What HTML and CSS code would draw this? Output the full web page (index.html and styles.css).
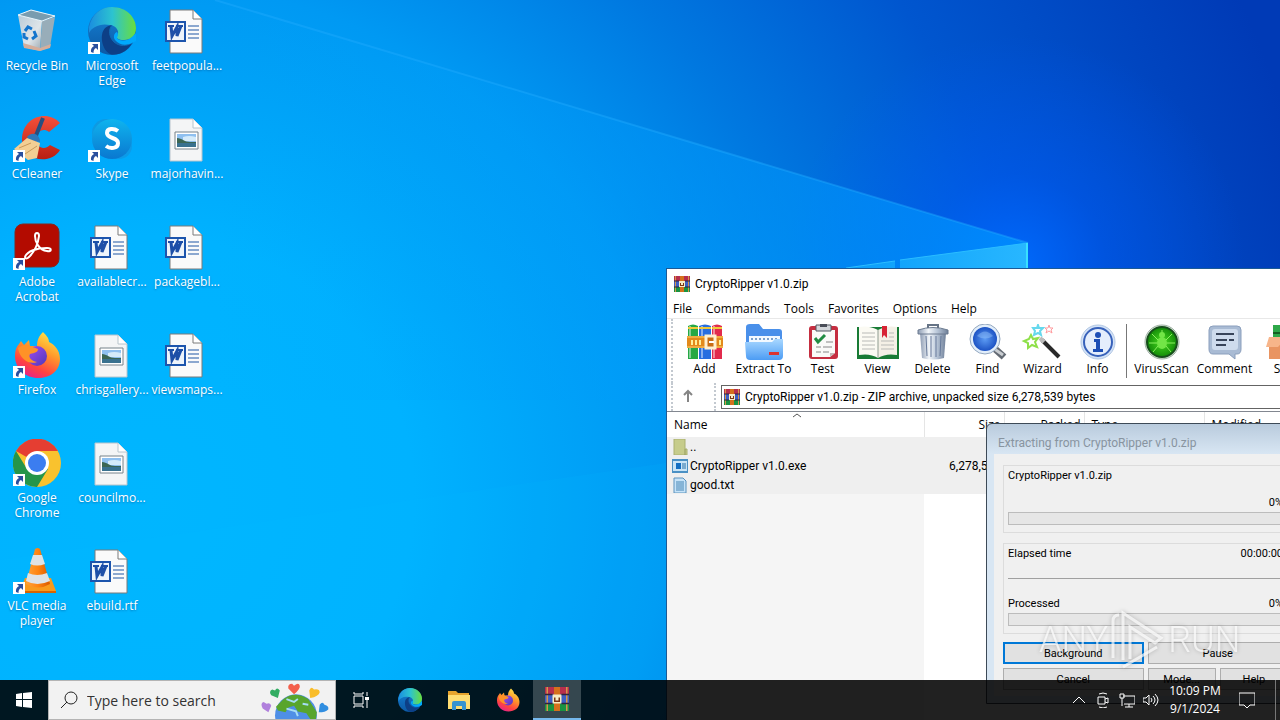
FILE: index.html
```html
<!DOCTYPE html>
<html lang="en">
<head>
    <meta charset="UTF-8">
    <meta name="viewport" content="width=device-width, initial-scale=1.0">
    <title>Desktop</title>
    <link rel="stylesheet" href="styles.css">
</head>
<body>
    <!-- icon library -->
    <svg class="sprite" aria-hidden="true">
        <defs>
            <linearGradient id="g-edge1" x1="0" y1="0" x2="1" y2="0"><stop offset="0" stop-color="#1a8ee0"/><stop offset=".5" stop-color="#2cc3d0"/><stop offset="1" stop-color="#6ade3c"/></linearGradient>
            <linearGradient id="g-edge2" x1="0" y1="0" x2="0" y2="1"><stop offset="0" stop-color="#1583d8"/><stop offset="1" stop-color="#0c59a4"/></linearGradient>
            <linearGradient id="g-ff" x1=".8" y1="0" x2=".3" y2="1"><stop offset="0" stop-color="#ffe94b"/><stop offset=".4" stop-color="#ff9a2a"/><stop offset=".75" stop-color="#ff4440"/><stop offset="1" stop-color="#e6218c"/></linearGradient>
            <linearGradient id="g-ff2" x1="0" y1="0" x2="1" y2="1"><stop offset="0" stop-color="#a44bf5"/><stop offset="1" stop-color="#4d39b8"/></linearGradient>
            <linearGradient id="g-red" x1="0" y1="0" x2="0" y2="1"><stop offset="0" stop-color="#f4503a"/><stop offset="1" stop-color="#b81e12"/></linearGradient>
            <linearGradient id="g-sky" x1="0" y1="0" x2="0" y2="1"><stop offset="0" stop-color="#0fb4ee"/><stop offset="1" stop-color="#0a78d0"/></linearGradient>
            <linearGradient id="g-vlc" x1="0" y1="0" x2="1" y2="0"><stop offset="0" stop-color="#ffa23a"/><stop offset=".5" stop-color="#ff8410"/><stop offset="1" stop-color="#d85800"/></linearGradient>
            <linearGradient id="g-bin" x1="0" y1="0" x2="1" y2="1"><stop offset="0" stop-color="#b8cbd8"/><stop offset=".6" stop-color="#dfe5e9"/><stop offset="1" stop-color="#9aa7b0"/></linearGradient>
            <linearGradient id="g-blue" x1="0" y1="0" x2="0" y2="1"><stop offset="0" stop-color="#a9d8ff"/><stop offset="1" stop-color="#4c9cf4"/></linearGradient>
            <linearGradient id="g-steel" x1="0" y1="0" x2="1" y2="0"><stop offset="0" stop-color="#8c9bb2"/><stop offset=".35" stop-color="#f2f6fa"/><stop offset=".65" stop-color="#b7c5d7"/><stop offset="1" stop-color="#6f7f98"/></linearGradient>
            <radialGradient id="g-lens"><stop offset="0" stop-color="#5d9cf4"/><stop offset="1" stop-color="#1d53c4"/></radialGradient>
            <radialGradient id="g-green"><stop offset="0" stop-color="#49dc20"/><stop offset="1" stop-color="#128a08"/></radialGradient>
        </defs>
        <symbol id="shortcut" viewBox="0 0 12 12">
            <path d="M0 0h12v12H0z" fill="#fff"/>
            <path d="M4 2h6v6L8 6C6 7 5.500 8.500 5.500 11L3 10C2.500 7 4 5 6 4z" fill="#2a4f9e"/>
        </symbol>
        <symbol id="i-bin" viewBox="0 0 48 48">
            <path d="M5 8l24 6-2 30-16-4z" fill="url(#g-bin)"/>
            <path d="M29 14l13-4-5 30-10 4z" fill="#98adb9"/>
            <path d="M5 8l13-5 24 6-13 5z" fill="#799caf" stroke="#eff7fb"/>
            <path d="M10 36l17 5 11-4-1 4-10 3-16-3z" fill="#d5ae9b"/>
            <g fill="none" stroke="#1475cc" stroke-width="3"><path d="M12 24l3-4 4 2"/><path d="M21 24l2 5-4 3"/><path d="M15 32l-4-2 0-4"/></g>
        </symbol>
        <symbol id="i-edge" viewBox="0 0 48 48">
            <circle cx="24" cy="24" r="24" fill="url(#g-edge2)"/>
            <path d="M1 20C4 7 13 0 24 0c15 0 24 11 24 21 0 8-5 12-12 12-6 0-8-2-7-4 3-4 0-10-7-11C12 16 4 20 1 26z" fill="url(#g-edge1)"/>
            <path d="M14 28c1-7 5-9 10-10-4 5-3 12 2 17 6 5 13 4 18 1-5 9-14 13-22 11-6-3-9-12-8-19z" fill="#0d3f86"/>
            <path d="M24 18c-4 5-3 12 2 17 6 5 13 4 18 1" fill="none" stroke="#1069b4"/>
            <path class="cut" d="M29 25c2 3 0 5 0 6 1 3 10 4 15-1l4-4v8l-4 2c-6 3-13 2-17-3-2-3-1-7 2-8z"/>
        </symbol>
        <symbol id="i-word" viewBox="0 0 48 48">
            <path d="M7 3h23l9 9v34H7z" fill="#fafafa" stroke="#7b7b7b"/>
            <path d="M30 3v9h9" fill="#fff" stroke="#7b7b7b"/>
            <path d="M25 19h11M25 23h11M25 27h11M25 31h11" stroke="#1f57a5" stroke-width="1"/>
            <path d="M2 14h21v21H2z" fill="#1d55ad"/><path d="M4 16h17v17H4z" fill="#eef4fb"/>
            <path d="M5 19h6M13 19h7" stroke="#1d4fa8" stroke-width="2"/><path d="M8 19l1 10 5-9 0 9 4-10" fill="none" stroke="#1d4fa8" stroke-width="3"/>
        </symbol>
        <symbol id="i-pic" viewBox="0 0 48 48">
            <path d="M7 4h23l9 9v33H7z" fill="#f4f5f6" stroke="#b8c4cc"/>
            <path d="M30 4v9h9" fill="#fff" stroke="#b8c4cc"/>
            <path d="M12 17h23v17H12z" fill="#fff" stroke="#77828a"/>
            <path d="M14 19h19v13H14z" fill="#8fc0f0"/><path d="M20 22q6-2 13 0v4H20z" fill="#d5ebfa"/>
            <path d="M14 23c5 0 7 4 13 4h6v2H14z" fill="#3b6654"/><path d="M14 28h19v4H14z" fill="#39718f"/>
        </symbol>
        <symbol id="i-ccleaner" viewBox="0 0 48 48">
            <path d="M47 8L36 17c-6-5-13 0-13 7 0 8 8 12 14 6l10 5C38 50 10 47 9 25 9 2 34-6 47 8z" fill="url(#g-red)"/>
            <path d="M30 3l-8 20" stroke="#264f80" stroke-width="4"/><path d="M14 22c5-6 13-3 13 5l-11-2z" fill="#2f78b8"/>
            <path d="M1 34l13-11 13 5-3 15-9 2z" fill="#f3cf94"/><path d="M6 33l12-5M12 39l12-8" stroke="#c99a5a"/>
        </symbol>
        <symbol id="i-skype" viewBox="0 0 48 48">
            <circle cx="18" cy="18" r="14" fill="#0e9ae2"/><circle cx="31" cy="31" r="13" fill="#0c9be8"/><circle cx="24" cy="24" r="20" fill="url(#g-sky)"/>
            <path d="M30 16c-4-3-11-3-11 2 0 6 11 4 11 10 0 6-8 6-12 3" fill="none" stroke="#fff" stroke-width="4"/>
        </symbol>
        <symbol id="i-acrobat" viewBox="0 0 48 48">
            <rect x="2" y="1" width="44" height="43" rx="8" fill="#b30b00" stroke="#85261f"/>
            <path d="M12 34c2-6 12-9 22-9 5 0 5 4 0 3-8-1-12-9-12-15 0-4 4-4 4 0-1 8-5 16-10 21-2 2-4 2-4 0z" fill="none" stroke="#fff" stroke-width="2"/>
        </symbol>
        <symbol id="i-firefox" viewBox="0 0 48 48">
            <path d="M30 1c3 3 6 6 6 10 5 2 11 8 11 17 0 12-10 19-22 19S2 38 2 25c0-5 1-9 4-12l2-3 3 4 5-5 1 6 7 0c0-6 2-10 6-14z" fill="url(#g-ff)"/>
            <circle cx="24" cy="25" r="10" fill="url(#g-ff2)"/>
            <path d="M5 17c4-3 9-4 12-2l8 3c0 3-3 4-8 5-2 3 1 7 7 8-7 3-17-2-19-14z" fill="#ff9227"/>
        </symbol>
        <symbol id="i-chrome" viewBox="0 0 48 48">
            <circle cx="24" cy="24" r="24" fill="#f9c22e"/>
            <path d="M24 24L3 12A24 24 0 0 1 45 12H24z" fill="#e53e32"/>
            <path d="M3 12A24 24 0 0 0 24 48L35 30 24 24 14 30z" fill="#25954a"/>
            <circle cx="24" cy="24" r="12" fill="#fff"/><circle cx="24" cy="24" r="9" fill="#3b7df0"/>
        </symbol>
        <symbol id="i-vlc" viewBox="0 0 48 48">
            <path d="M12 31h26l5 13v2H7v-2z" fill="#f99a1c"/><path d="M7 44h36v2H7z" fill="#d86400"/>
            <path d="M22 2q3-2 5 0l10 35q-12 7-24 0z" fill="url(#g-vlc)"/>
            <path d="M20 8h9l3 9q-8 3-15 0zM15 26q9 4 19 0l3 8q-13 6-24 0z" fill="#dfe2e4"/>
        </symbol>
        <symbol id="i-rar" viewBox="0 0 16 16">
            <path d="M0 0h16v5H0z" fill="#b62f4d"/><path d="M0 5h16v6H0z" fill="#3d5fc4"/><path d="M0 11h16v5H0z" fill="#199341"/>
            <path d="M1 0h1v16H1zM14 0h1v16h-1z" fill="#d7954b"/><path d="M6 0h4v16H6z" fill="#d5701c"/>
            <path d="M5 5h6v6H5z" fill="#f7ecc5"/><path d="M6 7h1v2h2V7h1v3H6z" fill="#7c3514"/><path d="M0 5h5M11 5h5M0 11h5M11 11h5" stroke="#30243d"/>
        </symbol>
        <symbol id="i-add" viewBox="0 0 36 36">
            <path d="M1 2q5-3 10 0v33H1z" fill="#26a845"/><path d="M12 2q6-3 12 0v33H12z" fill="#276ee0"/><path d="M25 2q5-3 10 0v33H25z" fill="#e22b4d"/>
            <path d="M3 2v32M15 2v32M27 2v32" stroke="#fff" stroke-opacity=".45" stroke-width="2"/>
            <path d="M1 4h10M12 4h12M25 4h10" stroke="#f1c93a" stroke-width="2"/>
            <path d="M0 12h36v12H0z" fill="#e38a1b"/><path d="M0 13h36M0 23h36" stroke="#ffd06a"/>
            <path d="M19 12h9v12h-9z" fill="#c96d13" stroke="#fff0cf" stroke-width="3"/><path d="M22 18h5" stroke="#fff" stroke-width="2"/><path d="M5 16v5M9 16v5M13 16v5M33 16v5" stroke="#fff09c" stroke-width="2"/>
        </symbol>
        <symbol id="i-extract" viewBox="0 0 38 36">
            <path d="M1 3q0-3 4-3h9l4 5h16q3 0 3 3v20H1z" fill="#4a90ea"/><path d="M4 12h31v12H4z" fill="#f2f9ff"/><path d="M6 15h27" stroke="#7aa0cc" stroke-dasharray="2 2" stroke-width="2"/>
            <path d="M0 18h27l3-3h8v17q0 4-4 4H5q-4 0-4-4z" fill="url(#g-blue)"/><path d="M24 28h10v3H24z" fill="#dc342f"/>
        </symbol>
        <symbol id="i-test" viewBox="0 0 36 36">
            <rect x="4" y="2" width="29" height="33" rx="3" fill="#c52e40"/><path d="M7 6h23v23l-5 4H7z" fill="#fafaf8"/><path d="M30 29h-5v4z" fill="#c3b7b5"/>
            <path d="M11 1h15v6H11z" fill="#d4d7db" stroke="#535660"/><path d="M15 0h7v3h-7z" fill="#4a4e58"/>
            <path d="M10 14l3 4 7-7" fill="none" stroke="#218b42" stroke-width="3"/><path d="M21 18h7M11 23h5M18 23h9M11 28h5M18 28h6" stroke="#888"/>
        </symbol>
        <symbol id="i-view" viewBox="0 0 44 36">
            <path d="M1 3h42v32H1z" fill="#187b35"/><path d="M22 6Q13 1 3 3v28q11-2 19 3z" fill="#fbfaf3"/><path d="M22 6q9-5 19-3v28q-11-2-19 3z" fill="#f4f0e6"/>
            <path d="M6 9h13M6 13h13M6 17h13M6 21h13M6 25h13M25 17h13M25 21h13M25 25h13M33 9h5M33 13h5" stroke="#b9bab7"/><path d="M22 6v28" stroke="#8e9c90"/>
            <path d="M26 2h5v12l-3-3-2 3z" fill="#d72435"/>
        </symbol>
        <symbol id="i-delete" viewBox="0 0 36 36">
            <path d="M5 9h26l-2 25q-11 3-22 0z" fill="url(#g-steel)"/><path d="M11 12l1 20M16 12v21M21 12v21M26 12l-1 20" stroke="#66799a"/>
            <path d="M3 6q15-5 30 0v4H3z" fill="url(#g-steel)" stroke="#6c7b90"/><path d="M13 4V1h10v3" fill="none" stroke="#667486" stroke-width="2"/>
        </symbol>
        <symbol id="i-find" viewBox="0 0 36 36">
            <path d="M24 24l10 9" stroke="#636a73" stroke-width="7"/><path d="M23 24l10 7" stroke="#c9cdd1" stroke-width="3"/>
            <circle cx="15" cy="15" r="15" fill="#e2eefa" stroke="#94a8c0"/><circle cx="15" cy="15" r="12" fill="url(#g-lens)"/><path d="M7 12q8-9 16 0-8 5-16 0z" fill="#a2cfff" opacity=".4"/>
        </symbol>
        <symbol id="i-wizard" viewBox="0 0 36 36">
            <path d="M17 16l17 17" stroke="#292929" stroke-width="4"/><path d="M15 14l4 4" stroke="#bbb" stroke-width="4"/><path d="M20 16l14 14" stroke="#aaa"/>
            <g fill="#fff"><path d="M6 11l2 4 5-1-3 4 2 5-5-2-4 3 0-5-4-2 5-2z" stroke="#8fe04a" stroke-width="2"/><path d="M13 1l1 3 4 0-3 3 1 4-3-2-4 2 1-4-2-3 4 0z" stroke="#66d8ed" stroke-width="2"/><path d="M24 1l1 3 3 0-2 2 1 3-3-2-3 2 1-3-2-2 3 0z" stroke="#ff9b9e"/></g>
        </symbol>
        <symbol id="i-info" viewBox="0 0 36 36">
            <circle cx="18" cy="18" r="17" fill="#d3e2f7" stroke="#b3c8e4"/><circle cx="18" cy="18" r="14" fill="#e5eefc" stroke="#3761ba" stroke-width="2"/>
            <circle cx="18" cy="11" r="3" fill="#1d4eb5"/><path d="M14 15h6v10h3v3H13v-3h3v-7h-2z" fill="#1d4eb5"/>
        </symbol>
        <symbol id="i-virus" viewBox="0 0 36 36">
            <circle cx="18" cy="18" r="17" fill="#dfe8e1" stroke="#9baea0"/><circle cx="18" cy="18" r="15" fill="url(#g-green)" stroke="#174e1b" stroke-width="2"/>
            <g fill="none" stroke="#8bf060"><path d="M18 6v7M8 10l6 6M28 10l-6 6M5 19h8M31 19h-8M9 28l5-6M27 28l-5-6"/></g><ellipse cx="18" cy="19" rx="5" ry="6" fill="#72e547"/><circle cx="18" cy="11" r="3" fill="#72e547"/>
        </symbol>
        <symbol id="i-comment" viewBox="0 0 36 36">
            <path d="M6 2h24q4 0 4 4v19q0 5-4 5h-2v5l-6-5H6q-4 0-4-5V6q0-4 4-4z" fill="#a9bbd4" stroke="#8b9fbd"/><rect x="5" y="5" width="26" height="21" rx="3" fill="#cedbed"/>
            <path d="M9 10h18M9 16h11M22 16h5M9 21h10" stroke="#38445a" stroke-width="2"/>
        </symbol>
        <symbol id="i-sfx" viewBox="0 0 36 36">
            <path d="M7 1h21v14H7z" fill="#2ea849"/><path d="M7 9h21" stroke="#165f23" stroke-width="2"/><path d="M3 16h30v19H3z" fill="#e99461"/><path d="M3 13l-3 10h12l6-7 5 7h13l-4-10z" fill="#f7b58a"/>
        </symbol>
        <symbol id="i-folder" viewBox="0 0 16 16"><path d="M2 0h11v10h2v6H2z" fill="#c6cc8b" stroke="#aab071"/><path d="M13 10v6" stroke="#949b5d"/></symbol>
        <symbol id="i-exe" viewBox="0 0 16 16"><path d="M0 2h16v12H0z" fill="#c9e4f6" stroke="#4a90c4" stroke-width="2"/><path d="M4 5h5v6H4z" fill="#146fc2"/><path d="M10 6h4M10 8h4M10 10h4" stroke="#2870a8"/></symbol>
        <symbol id="i-txt" viewBox="0 0 16 16"><path d="M2 1h9l3 3v12H2z" fill="#c6e3f8" stroke="#5a92bd"/><path d="M4 5h8M4 7h8M4 9h8M4 11h8M4 13h8" stroke="#4686b5"/></symbol>
        <symbol id="i-explorer" viewBox="0 0 24 24"><path d="M1 3h8l2 2h11v16H1z" fill="#e7a42d"/><path d="M1 7h22v14H1z" fill="#ffdd72"/><path d="M5 22v-7q0-2 2-2h10q2 0 2 2v7h-4v-4H9v4z" fill="#3793cf"/></symbol>
        <symbol id="i-earth" viewBox="0 0 72 40">
            <circle cx="37" cy="36" r="22" fill="#4f8fe6"/><path d="M24 19q12-9 26 0l9 14-1 7h-6l-4-6-9-2-4-6-6 2-3 5-8-2-2-4z" fill="#58a52d"/><path d="M27 19l8 3 4-3M27 29l10 3 2 5M44 24l6 1" stroke="#a6ddf4" stroke-width="2" fill="none"/>
            <path d="M35 14l-6-6q-1-5 4-5l2 2q5-4 6 0 1 3-6 9z" fill="#f35f4c"/><path d="M18 18l-7-3q-3-4 1-6l3 1q2-4 5 0z" fill="#33ad63"/><path d="M52 18l-1-8q2-5 5-1 6-1 6 3-1 4-10 6z" fill="#f9bd2a"/>
            <path d="M8 33l-6-4q-3-6 1-7l3 2q4-2 5 2z" fill="#b080dc"/><path d="M61 33l1-8q3-4 5 0 5 1 4 5-3 3-10 3z" fill="#318ee0"/>
        </symbol>
    </svg>

    <svg class="wallpaper" viewBox="0 0 1280 720" preserveAspectRatio="none" aria-hidden="true">
        <defs>
            <radialGradient id="w-base" gradientUnits="userSpaceOnUse" cx="150" cy="500" r="1200">
                <stop offset="0" stop-color="#00b6ff"/><stop offset=".22" stop-color="#00b2ff"/><stop offset=".43" stop-color="#0099f3"/><stop offset=".58" stop-color="#0078e0"/><stop offset=".75" stop-color="#0056cf"/><stop offset="1" stop-color="#003ab6"/>
            </radialGradient>
            <radialGradient id="w-glow" gradientUnits="userSpaceOnUse" cx="1015" cy="265" r="230"><stop offset="0" stop-color="#006cff" stop-opacity=".9"/><stop offset=".4" stop-color="#005cff" stop-opacity=".4"/><stop offset="1" stop-color="#005cff" stop-opacity="0"/></radialGradient>
            <linearGradient id="w-beam" x1="0" y1="0" x2="1" y2="0"><stop offset="0" stop-color="#00a5fa" stop-opacity="0"/><stop offset="1" stop-color="#0094ff"/></linearGradient>
            <linearGradient id="w-pane" x1="0" y1="0" x2="1" y2="0"><stop offset="0" stop-color="#0a9dfa"/><stop offset="1" stop-color="#28b7ff"/></linearGradient>
        </defs>
        <path d="M0 0h1280v720H0z" fill="url(#w-base)"/>
        <path d="M0 0h1280v720H0z" fill="url(#w-glow)"/>
        <path d="M215 0L1028 243V400H215z" fill="url(#w-beam)" opacity=".75"/>
        <path d="M215 0L1028 243" stroke="#24adff" stroke-width="2" stroke-opacity=".4"/>
        <path d="M666 463L0 560V720H666z" fill="#00baff" opacity=".12"/>
        <path d="M846 268l49-7v40h-49zM900 260l128-17v50H900z" fill="url(#w-pane)"/>
        <path d="M846 268l49-7M900 260l128-17" fill="none" stroke="#2bbdff"/>
        <path d="M1027 243v50" stroke="#39e0ff" stroke-width="2"/>
    </svg>

    <main class="desktop">
        <div class="icons">
            <button class="shortcut"><svg class="pic"><use href="#i-bin"/></svg><span>Recycle Bin</span></button>
            <button class="shortcut"><svg class="pic"><use href="#i-ccleaner"/></svg><svg class="arrow"><use href="#shortcut"/></svg><span>CCleaner</span></button>
            <button class="shortcut"><svg class="pic"><use href="#i-acrobat"/></svg><svg class="arrow"><use href="#shortcut"/></svg><span>Adobe Acrobat</span></button>
            <button class="shortcut"><svg class="pic"><use href="#i-firefox"/></svg><svg class="arrow"><use href="#shortcut"/></svg><span>Firefox</span></button>
            <button class="shortcut"><svg class="pic"><use href="#i-chrome"/></svg><svg class="arrow"><use href="#shortcut"/></svg><span>Google Chrome</span></button>
            <button class="shortcut"><svg class="pic"><use href="#i-vlc"/></svg><svg class="arrow"><use href="#shortcut"/></svg><span>VLC media player</span></button>
            <button class="shortcut"><svg class="pic"><use href="#i-edge"/></svg><svg class="arrow"><use href="#shortcut"/></svg><span>Microsoft Edge</span></button>
            <button class="shortcut"><svg class="pic"><use href="#i-skype"/></svg><svg class="arrow"><use href="#shortcut"/></svg><span>Skype</span></button>
            <button class="shortcut"><svg class="pic"><use href="#i-word"/></svg><span>availablecr...</span></button>
            <button class="shortcut"><svg class="pic"><use href="#i-pic"/></svg><span>chrisgallery...</span></button>
            <button class="shortcut"><svg class="pic"><use href="#i-pic"/></svg><span>councilmo...</span></button>
            <button class="shortcut"><svg class="pic"><use href="#i-word"/></svg><span>ebuild.rtf</span></button>
            <button class="shortcut"><svg class="pic"><use href="#i-word"/></svg><span>feetpopula...</span></button>
            <button class="shortcut"><svg class="pic"><use href="#i-pic"/></svg><span>majorhavin...</span></button>
            <button class="shortcut"><svg class="pic"><use href="#i-word"/></svg><span>packagebl...</span></button>
            <button class="shortcut"><svg class="pic"><use href="#i-word"/></svg><span>viewsmaps...</span></button>
        </div>

        <section class="window archive">
            <header class="titlebar"><svg class="small"><use href="#i-rar"/></svg>CryptoRipper v1.0.zip</header>
            <nav class="menu">
                <button>File</button><button>Commands</button><button>Tools</button><button>Favorites</button><button>Options</button><button>Help</button>
            </nav>
            <div class="toolbar">
                <button class="tool"><svg><use href="#i-add"/></svg>Add</button>
                <button class="tool wide"><svg><use href="#i-extract"/></svg>Extract To</button>
                <button class="tool"><svg><use href="#i-test"/></svg>Test</button>
                <button class="tool"><svg><use href="#i-view"/></svg>View</button>
                <button class="tool"><svg><use href="#i-delete"/></svg>Delete</button>
                <button class="tool"><svg><use href="#i-find"/></svg>Find</button>
                <button class="tool"><svg><use href="#i-wizard"/></svg>Wizard</button>
                <button class="tool"><svg><use href="#i-info"/></svg>Info</button>
                <span class="divider"></span>
                <button class="tool wide"><svg><use href="#i-virus"/></svg>VirusScan</button>
                <button class="tool wide"><svg><use href="#i-comment"/></svg>Comment</button>
                <button class="tool"><svg><use href="#i-sfx"/></svg>SFX</button>
            </div>
            <div class="location">
                <button class="up" aria-label="Up one level"><svg viewBox="0 0 16 16"><path d="M8 14V3M4 7l4-4 4 4" fill="none" stroke="#858585" stroke-width="2"/></svg></button>
                <label class="address"><svg class="small"><use href="#i-rar"/></svg><input type="text" aria-label="Address" value="CryptoRipper v1.0.zip - ZIP archive, unpacked size 6,278,539 bytes"></label>
            </div>
            <div class="listing">
                <table class="files">
                    <colgroup><col class="c-name"><col class="c-size"><col class="c-size"><col class="c-type"><col></colgroup>
                    <thead>
                        <tr><th class="sorted">Name<svg class="caret" viewBox="0 0 8 5"><path d="M0 4l4-3 4 3" fill="none" stroke="#555"/></svg></th><th class="num">Size</th><th class="num">Packed</th><th>Type</th><th>Modified</th></tr>
                    </thead>
                    <tbody>
                        <tr><td><span class="file"><svg class="small"><use href="#i-folder"/></svg>..</span></td><td></td><td></td><td></td><td></td></tr>
                        <tr><td><span class="file"><svg class="small"><use href="#i-exe"/></svg>CryptoRipper v1.0.exe</span></td><td class="num">6,278,539</td><td></td><td></td><td></td></tr>
                        <tr><td><span class="file"><svg class="small"><use href="#i-txt"/></svg>good.txt</span></td><td></td><td></td><td></td><td></td></tr>
                    </tbody>
                </table>
            </div>
        </section>

        <section class="window dialog">
            <header class="dialog-title">Extracting from CryptoRipper v1.0.zip</header>
            <div class="dialog-body">
                <div class="group first">
                    <label for="file-progress">CryptoRipper v1.0.zip</label>
                    <span class="value">0%</span>
                    <progress id="file-progress" value="0" max="100"></progress>
                </div>
                <div class="group second">
                    <div class="line"><span>Elapsed time</span><span>00:00:00</span></div>
                    <hr>
                    <div class="line"><label for="total-progress">Processed</label><span>0%</span></div>
                    <progress id="total-progress" value="0" max="100"></progress>
                </div>
                <div class="buttons">
                    <button class="push half focus">Background</button>
                    <button class="push half">Pause</button>
                    <button class="push half">Cancel</button>
                    <button class="push">Mode...</button>
                    <button class="push">Help</button>
                </div>
            </div>
        </section>

        <div class="watermark">
            <span>ANY</span>
            <svg viewBox="0 0 60 60"><path d="M5 48V11q0-6 6-6M15 50V3l38 25-6 5-25-16v32M15 57l34-20" fill="none" stroke="currentColor" stroke-width="3"/></svg>
            <span>RUN</span>
        </div>
    </main>

    <footer class="taskbar">
        <button class="task" aria-label="Start"><svg class="win" viewBox="0 0 16 16"><path d="M0 2l6-1v6H0zM7 1l9-1v7H7zM0 8h6v7l-6-1zM7 8h9v8l-9-1z" fill="#fff"/></svg></button>
        <label class="search">
            <svg class="glass" viewBox="0 0 18 18"><circle cx="11" cy="7" r="6" fill="none" stroke="#222"/><path d="M7 11l-6 6" stroke="#222"/></svg>
            <input type="text" aria-label="Search" placeholder="Type here to search">
            <svg class="earth"><use href="#i-earth"/></svg>
        </label>
        <div class="apps">
            <button class="task" aria-label="Task View"><svg class="win" viewBox="0 0 16 16"><path d="M1 4h9v8H1zM1 0v2h9V0M1 16v-2h9v2M14 0v4M14 8v8" fill="none" stroke="#fff"/><path d="M12 5h4v3h-4z" fill="#fff"/></svg></button>
            <button class="task" aria-label="Edge"><svg><use href="#i-edge"/></svg></button>
            <button class="task" aria-label="Explorer"><svg><use href="#i-explorer"/></svg></button>
            <button class="task" aria-label="Firefox"><svg><use href="#i-firefox"/></svg></button>
            <button class="task active" aria-label="WinRAR"><svg><use href="#i-rar"/></svg></button>
        </div>
        <div class="tray">
            <button class="tray-icon" aria-label="Hidden icons"><svg viewBox="0 0 16 16"><path d="M2 11l6-6 6 6" fill="none" stroke="#fff"/></svg></button>
            <button class="tray-icon" aria-label="Camera"><svg viewBox="0 0 16 16"><path d="M3 5h7v7H3zM10 7l3-1v5l-3-1M4 2q4-2 8 0M4 15q4 2 8 0" fill="none" stroke="#fff"/></svg></button>
            <button class="tray-icon" aria-label="Network"><svg viewBox="0 0 16 16"><path d="M4 4h12v8H5M1 2h4v4H1zM3 6v8M10 12v3M6 15h8" fill="none" stroke="#fff"/></svg></button>
            <button class="tray-icon" aria-label="Volume"><svg viewBox="0 0 16 16"><path d="M0 6h3l3-3v10l-3-3H0zM8 6q2 2 0 4M10 4q4 4 0 8M12 2q6 6 0 12" fill="none" stroke="#fff"/></svg></button>
            <button class="clock"><span>10:09 PM</span><span>9/1/2024</span></button>
            <button class="notify" aria-label="Notifications"><svg viewBox="0 0 16 16"><path d="M0 1h16v12h-5l-3 3-3-3H0z" fill="none" stroke="#fff"/></svg></button>
            <button class="peek" aria-label="Show desktop"></button>
        </div>
    </footer>
</body>
</html>
```

FILE: styles.css
```css
* {
    box-sizing: border-box;
}
body {
    margin: 0;
    height: 100vh;
    display: flex;
    flex-direction: column;
    overflow: hidden;
    position: relative;
    font-family: "Open Sans", "Noto Sans", sans-serif;
    font-size: 12px;
    color: #000;
    background: #00a2fd;
}
button, input {
    font: inherit;
    color: inherit;
    border: 0;
    padding: 0;
    background: none;
}
.sprite {
    position: absolute;
    width: 0;
    height: 0;
}
.wallpaper {
    position: absolute;
    width: 100%;
    height: 100%;
}
.cut {
    fill: #00a9fd;
}

/* desktop icons */
.desktop {
    flex: 1;
    min-height: 0;
    position: relative;
}
.icons {
    display: grid;
    grid-auto-flow: column;
    grid-template-rows: repeat(6, 108px);
    grid-auto-columns: 74px;
    column-gap: 1px;
}
.shortcut {
    position: relative;
    display: flex;
    flex-direction: column;
    align-items: center;
    gap: 3px;
    padding: 7px 0 0;
    color: #fff;
    line-height: 15px;
    text-shadow: 0 1px 2px rgba(0, 40, 90, 0.4);
}
.shortcut .pic {
    width: 48px;
    height: 48px;
}
.arrow {
    position: absolute;
    top: 42px;
    left: 13px;
    width: 12px;
    height: 12px;
}

/* windows */
.window {
    position: absolute;
}
.small {
    width: 16px;
    height: 16px;
    flex: none;
}
.archive {
    left: 666px;
    top: 268px;
    width: 780px;
    height: 480px;
    display: flex;
    flex-direction: column;
    font-family: Roboto, "Open Sans", sans-serif;
    background: #fff;
    border: 1px solid #1c5a96;
}
.titlebar {
    display: flex;
    align-items: center;
    gap: 5px;
    height: 30px;
    padding: 0 7px;
}
.menu {
    display: flex;
    height: 20px;
    font-family: "Open Sans", sans-serif;
    border-bottom: 1px solid #e8e8e8;
}
.menu button {
    padding: 0 8px 0 6px;
}
.toolbar {
    display: flex;
    height: 64px;
    margin-left: 4px;
    padding: 5px 0 0 4px;
    font-family: "Open Sans", sans-serif;
    border-left: 2px dotted #c3c9d0;
}
.tool {
    width: 55px;
    flex: none;
    display: flex;
    flex-direction: column;
    align-items: center;
    line-height: 18px;
}
.tool.wide {
    width: 63px;
}
.tool svg {
    width: 44px;
    height: 36px;
}
.divider {
    width: 1px;
    height: 54px;
    margin: 0 3px 0 1px;
    background: #777;
}
.location {
    display: flex;
    align-items: center;
    height: 28px;
    margin-left: 4px;
    border-left: 2px dotted #c3c9d0;
}
.up {
    width: 43px;
    height: 28px;
    border-right: 2px dotted #c3c9d0;
}
.up svg {
    width: 16px;
    height: 16px;
    margin-right: 12px;
}
.address {
    flex: 1;
    display: flex;
    align-items: center;
    gap: 5px;
    height: 24px;
    margin-left: 5px;
    padding: 0 2px;
    border: 1px solid #646464;
}
.address input {
    flex: 1;
}
.listing {
    flex: 1;
    border-top: 1px solid #828790;
    background: linear-gradient(#f5f5f5, #f5f5f5) no-repeat;
    background-size: 257px 100%;
}
.files {
    width: 100%;
    table-layout: fixed;
    border-collapse: collapse;
}
.c-name {
    width: 257px;
}
.c-size {
    width: 80px;
}
.c-type {
    width: 120px;
}
.files th {
    height: 25px;
    padding: 0 7px;
    font-family: "Open Sans", sans-serif;
    font-weight: normal;
    text-align: left;
    background: #fff;
    border-right: 1px solid #e5e5e5;
}
.files td {
    height: 19px;
    padding: 0 5px;
    line-height: 16px;
    background: #efefef;
}
.files .num {
    padding-right: 3px;
    text-align: right;
}
.sorted {
    position: relative;
}
.caret {
    position: absolute;
    top: 1px;
    left: 126px;
    width: 8px;
    height: 5px;
}
.file {
    display: flex;
    gap: 2px;
}

/* extraction dialog */
.dialog {
    left: 986px;
    top: 423px;
    width: 319px;
    padding: 0 7px 7px;
    font-family: Roboto, "Open Sans", sans-serif;
    font-size: 11px;
    background: linear-gradient(#b9cbdd, #d8e6f3 30px);
    border: 1px solid #3d4a57;
    border-radius: 6px 6px 0 0;
}
.dialog-title {
    height: 30px;
    padding: 0 4px;
    font-size: 12px;
    line-height: 38px;
    color: #8894a0;
}
.dialog-body {
    padding: 11px 9px 6px;
    background: #f0f0f0;
}
.group {
    display: flex;
    flex-direction: column;
    padding: 1px 4px 5px;
    line-height: 18px;
    border: 1px solid #dcdcdc;
}
.first {
    height: 68px;
    margin-bottom: 10px;
}
.second {
    height: 91px;
    margin-bottom: 8px;
}
.value {
    margin-top: 9px;
    text-align: right;
}
.line {
    display: flex;
    justify-content: space-between;
}
.group hr {
    width: 100%;
    margin: 15px 0 16px;
    border: 0;
    border-top: 1px solid #a0a0a0;
}
progress {
    appearance: none;
    display: block;
    width: 100%;
    height: 13px;
    border: 1px solid #bcbcbc;
}
progress::-webkit-progress-bar {
    background: #e6e6e6;
}
.buttons {
    display: grid;
    grid-template-columns: repeat(4, 1fr);
    gap: 4px;
}
.push {
    height: 22px;
    background: #e1e1e1;
    border: 1px solid #adadad;
}
.half {
    grid-column: span 2;
}
.focus {
    border: 2px solid #0078d7;
}

.watermark {
    position: absolute;
    left: 1039px;
    top: 610px;
    display: flex;
    align-items: center;
    font-family: Roboto, sans-serif;
    font-weight: 300;
    font-size: 36px;
    color: rgba(255, 255, 255, 0.7);
    filter: drop-shadow(0 0 2px rgba(0, 0, 0, 0.3));
    pointer-events: none;
}
.watermark svg {
    width: 60px;
    height: 60px;
}

/* taskbar */
.taskbar {
    position: relative;
    display: flex;
    height: 40px;
    color: #fff;
    background: rgba(0, 0, 0, 0.87);
}
.task {
    width: 48px;
    height: 40px;
    display: flex;
    align-items: center;
    justify-content: center;
}
.task svg {
    width: 24px;
    height: 24px;
}
.task .win {
    width: 16px;
    height: 16px;
}
.task .cut {
    fill: #001822;
}
.search {
    width: 288px;
    display: flex;
    align-items: center;
    padding-left: 11px;
    background: #f2f2f2;
    border: 1px solid #b4b4b4;
}
.glass {
    width: 18px;
    height: 18px;
    flex: none;
}
.search input {
    flex: 1;
    min-width: 0;
    margin-left: 9px;
    font-size: 14px;
}
.search input::placeholder {
    color: #333;
}
.earth {
    width: 72px;
    height: 38px;
    flex: none;
    margin-right: 4px;
}
.apps {
    display: flex;
    gap: 1px;
    margin-left: 1px;
}
.active {
    background: #35474f;
    border-bottom: 2px solid #76b9ed;
}
.tray {
    display: flex;
    margin-left: auto;
}
.tray-icon {
    width: 24px;
}
.tray-icon svg, .notify svg {
    width: 16px;
    height: 16px;
    display: block;
    margin: auto;
}
.clock {
    width: 64px;
    display: flex;
    flex-direction: column;
    align-items: center;
    justify-content: center;
    line-height: 18px;
}
.notify {
    width: 40px;
}
.peek {
    width: 5px;
    margin-left: 8px;
    border-left: 1px solid #777;
}
```
